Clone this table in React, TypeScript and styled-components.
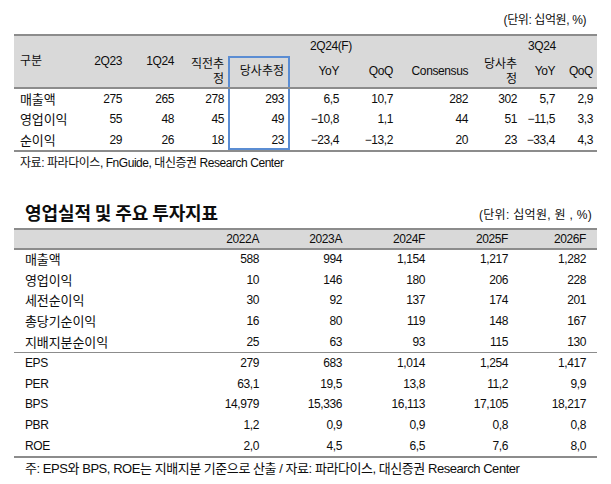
import React from 'react';
import styled, { createGlobalStyle, css } from 'styled-components';

const GlobalStyle = createGlobalStyle`
    body {
        margin: 0;
        background: #ffffff;
        color: #0d0d0d;
        font-family: 'Liberation Sans', 'Noto Sans CJK KR', sans-serif;
        font-size: 12px;
    }
`;

const LINE = '#8c8c8c';
const HEAD_BG = '#d9d9d9';
const BLUE = '#5b8dd3';

const isKr = (s: string) => /^[가-힣\s]+$/.test(s);

const Page = styled.div`
    width: 583px;
    padding: 0 14px;
`;

const Unit = styled.div`
    display: flex;
    justify-content: flex-end;
    padding: 12px 11px 0 0;
    height: 22px;
    line-height: 16px;
    letter-spacing: -0.4px;
`;

const Table = styled.table`
    width: 583px;
    table-layout: fixed;
    border-collapse: collapse;
    border-top: 2px solid ${LINE};
    border-bottom: 2px solid ${LINE};
    letter-spacing: -0.4px;
`;

const Head = styled.thead`
    background: ${HEAD_BG};
`;

const Th = styled.th<{ $left?: boolean; $bottom?: boolean; $pad?: number; $kr?: boolean }>`
    font-weight: normal;
    text-align: ${(p) => (p.$left ? 'left' : 'right')};
    vertical-align: middle;
    padding: 0 4px 0 ${(p) => (p.$pad !== undefined ? p.$pad : 4)}px;
    line-height: 15px;
    ${(p) =>
        p.$kr &&
        css`
            letter-spacing: 0;
        `}
    ${(p) =>
        p.$bottom &&
        css`
            border-bottom: 2px solid ${LINE};
        `}
`;

const Td = styled.td<{ $left?: boolean; $pad?: number; $kr?: boolean }>`
    text-align: ${(p) => (p.$left ? 'left' : 'right')};
    padding: 0 4px 0 ${(p) => (p.$pad !== undefined ? p.$pad : 4)}px;
    line-height: 15px;
    white-space: nowrap;
    ${(p) =>
        p.$kr &&
        css`
            font-size: 13px;
            letter-spacing: -0.1px;
        `}
`;

// highlighted "당사추정" column
const boxSides = `inset 2px 0 0 ${BLUE}, inset -2px 0 0 ${BLUE}`;

const BoxTh = styled(Th)`
    box-shadow: ${boxSides}, inset 0 2px 0 ${BLUE};
    padding-right: 6px;
`;

const BoxTd = styled(Td)<{ $last?: boolean }>`
    box-shadow: ${boxSides}${(p) => (p.$last ? `, inset 0 -2px 0 ${BLUE}` : '')};
    padding-right: 6px;
`;

const Row = styled.tr<{ $h: number; $sep?: boolean }>`
    height: ${(p) => p.$h}px;
    ${(p) =>
        p.$sep &&
        css`
            border-bottom: 1px solid ${LINE};
        `}
`;

const Note = styled.div<{ $pad: number; $top: number; $size?: number }>`
    padding: ${(p) => p.$top}px 0 0 ${(p) => p.$pad}px;
    font-size: ${(p) => p.$size || 12}px;
    line-height: 16px;
    letter-spacing: -0.45px;
    white-space: nowrap;
`;

const SectionHead = styled.div`
    display: flex;
    justify-content: space-between;
    align-items: flex-end;
    height: 57px;
    padding-bottom: 5px;
    box-sizing: border-box;
`;

const Title = styled.h2`
    margin: 0 0 0 11px;
    font-family: 'Noto Sans CJK KR', sans-serif;
    font-size: 18px;
    font-weight: bold;
    line-height: 22px;
    letter-spacing: -0.1px;
`;

const SubUnit = styled.span`
    line-height: 16px;
    padding-right: 5px;
    letter-spacing: 0.3px;
`;

const quarterRows = [
    ['매출액', '275', '265', '278', '293', '6,5', '10,7', '282', '302', '5,7', '2,9'],
    ['영업이익', '55', '48', '45', '49', '−10,8', '1,1', '44', '51', '−11,5', '3,3'],
    ['순이익', '29', '26', '18', '23', '−23,4', '−13,2', '20', '23', '−33,4', '4,3'],
];

const q1Widths = [56, 56, 52, 50, 62, 53, 54, 75, 49, 38, 38];

const annualTop = [
    ['매출액', '588', '994', '1,154', '1,217', '1,282'],
    ['영업이익', '10', '146', '180', '206', '228'],
    ['세전순이익', '30', '92', '137', '174', '201'],
    ['총당기순이익', '16', '80', '119', '148', '167'],
    ['지배지분순이익', '25', '63', '93', '115', '130'],
];

const annualBottom = [
    ['EPS', '279', '683', '1,014', '1,254', '1,417'],
    ['PER', '63,1', '19,5', '13,8', '11,2', '9,9'],
    ['BPS', '14,979', '15,336', '16,113', '17,105', '18,217'],
    ['PBR', '1,2', '0,9', '0,9', '0,8', '0,8'],
    ['ROE', '2,0', '4,5', '6,5', '7,6', '8,0'],
];

const a1Widths = [166, 83, 83, 83, 83, 85];

const AnnualRow: React.FC<{ cells: string[]; sep?: boolean }> = ({ cells, sep }) => (
    <Row $h={20.8} $sep={sep}>
        {cells.map((c, i) =>
            i === 0 ? (
                <Td key={i} $left $pad={11} $kr={isKr(c)}>
                    {c}
                </Td>
            ) : (
                <Td key={i} style={i === 5 ? { paddingRight: 11 } : undefined}>
                    {c}
                </Td>
            )
        )}
    </Row>
);

export default function App() {
    return (
        <Page>
            <GlobalStyle />
            <Unit>(단위: 십억원, %)</Unit>
            <Table>
                <colgroup>
                    {q1Widths.map((w, i) => (
                        <col key={i} style={{ width: w }} />
                    ))}
                </colgroup>
                <Head>
                    <Row $h={21}>
                        <Th rowSpan={2} $left $pad={6} $bottom $kr>
                            구분
                        </Th>
                        <Th rowSpan={2} $bottom>
                            2Q23
                        </Th>
                        <Th rowSpan={2} $bottom>
                            1Q24
                        </Th>
                        <Th />
                        <Th />
                        <Th colSpan={3} $left $pad={20}>
                            2Q24(F)
                        </Th>
                        <Th colSpan={3} $left $pad={56}>
                            3Q24
                        </Th>
                    </Row>
                    <Row $h={32}>
                        <Th $bottom $kr>
                            직전추정
                        </Th>
                        <BoxTh $bottom $kr>
                            당사추정
                        </BoxTh>
                        <Th $bottom>YoY</Th>
                        <Th $bottom>QoQ</Th>
                        <Th $bottom>Consensus</Th>
                        <Th $bottom $kr>
                            당사추정
                        </Th>
                        <Th $bottom>YoY</Th>
                        <Th $bottom>QoQ</Th>
                    </Row>
                </Head>
                <tbody>
                    {quarterRows.map((r, ri) => (
                        <Row key={ri} $h={21}>
                            {r.map((c, i) => {
                                if (i === 0)
                                    return (
                                        <Td key={i} $left $pad={6} $kr>
                                            {c}
                                        </Td>
                                    );
                                if (i === 4)
                                    return (
                                        <BoxTd key={i} $last={ri === quarterRows.length - 1}>
                                            {c}
                                        </BoxTd>
                                    );
                                return <Td key={i}>{c}</Td>;
                            })}
                        </Row>
                    ))}
                </tbody>
            </Table>
            <Note $pad={6} $top={3}>
                자료: 파라다이스, FnGuide, 대신증권 Research Center
            </Note>

            <SectionHead>
                <Title>영업실적 및 주요 투자지표</Title>
                <SubUnit>(단위: 십억원, 원 , %)</SubUnit>
            </SectionHead>
            <Table>
                <colgroup>
                    {a1Widths.map((w, i) => (
                        <col key={i} style={{ width: w }} />
                    ))}
                </colgroup>
                <Head>
                    <Row $h={20}>
                        <Th $bottom />
                        <Th $bottom>2022A</Th>
                        <Th $bottom>2023A</Th>
                        <Th $bottom>2024F</Th>
                        <Th $bottom>2025F</Th>
                        <Th $bottom style={{ paddingRight: 11 }}>
                            2026F
                        </Th>
                    </Row>
                </Head>
                <tbody>
                    {annualTop.map((r, ri) => (
                        <AnnualRow key={ri} cells={r} sep={ri === annualTop.length - 1} />
                    ))}
                    {annualBottom.map((r, ri) => (
                        <AnnualRow key={ri} cells={r} />
                    ))}
                </tbody>
            </Table>
            <Note $pad={11} $top={3} $size={13}>
                주: EPS와 BPS, ROE는 지배지분 기준으로 산출 / 자료: 파라다이스, 대신증권 Research Center
            </Note>
        </Page>
    );
}
